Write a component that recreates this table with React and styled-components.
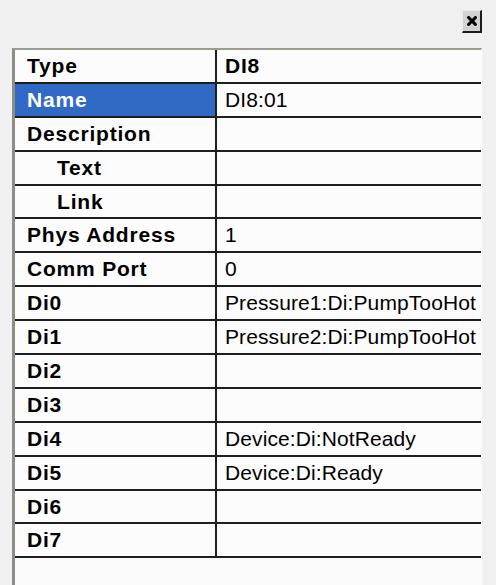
import React from "react";
import styled, { createGlobalStyle } from "styled-components";

const GlobalStyle = createGlobalStyle`
	html, body {
		margin: 0;
		padding: 0;
		background: #f0f0f0;
		font-family: "Liberation Sans", Arial, sans-serif;
	}
`;

const Window = styled.div`
	width: 496px;
	height: 585px;
	overflow: hidden;
	display: flex;
	flex-direction: column;
	background: #f0f0f0;
`;

const TitleBar = styled.div`
	display: flex;
	justify-content: flex-end;
	padding: 10px 14px 0 0;
`;

const CloseButton = styled.button`
	width: 20px;
	height: 23px;
	padding: 0;
	margin: 0;
	box-sizing: border-box;
	display: flex;
	align-items: center;
	justify-content: center;
	background: #d2d2d2;
	border: none;
	border-top: 1px solid #ececec;
	border-left: 1px solid #ececec;
	border-right: 2px solid #1c1c1c;
	border-bottom: 2px solid #1c1c1c;
	cursor: default;
`;

const Frame = styled.div`
	flex: 1;
	margin: 15px 14px 0 12px;
	border-top: 2px solid #9c9c8e;
	border-left: 3px solid #8e8e80;
	border-right: 1px solid #fdfdfd;
	background: #fafafa;
`;

const Row = styled.div`
	display: grid;
	grid-template-columns: 202px 1fr;
	height: 33.9px;
	box-sizing: border-box;
	border-bottom: 2px solid #1e1e1e;
`;

const Label = styled.div`
	display: flex;
	align-items: center;
	box-sizing: border-box;
	padding-left: ${(p) => 12 + (p.$indent ? 30 : 0)}px;
	border-right: 2px solid #1e1e1e;
	background: ${(p) => (p.$selected ? "#316ac5" : "#fcfcfc")};
	color: ${(p) => (p.$selected ? "#ffffff" : "#000000")};
	font-size: 21px;
	font-weight: bold;
	letter-spacing: 0.8px;
	white-space: nowrap;
`;

const Value = styled.div`
	display: flex;
	align-items: center;
	padding-left: 8px;
	background: #fcfcfc;
	color: #000;
	font-size: 21px;
	font-weight: ${(p) => (p.$bold ? "bold" : "normal")};
	letter-spacing: ${(p) => (p.$bold ? "0.8px" : "0.1px")};
	white-space: nowrap;
	overflow: hidden;
`;

const rows = [
	{ label: "Type", value: "DI8", bold: true },
	{ label: "Name", value: "DI8:01", selected: true },
	{ label: "Description", value: "" },
	{ label: "Text", value: "", indent: true },
	{ label: "Link", value: "", indent: true },
	{ label: "Phys Address", value: "1" },
	{ label: "Comm Port", value: "0" },
	{ label: "Di0", value: "Pressure1:Di:PumpTooHot" },
	{ label: "Di1", value: "Pressure2:Di:PumpTooHot" },
	{ label: "Di2", value: "" },
	{ label: "Di3", value: "" },
	{ label: "Di4", value: "Device:Di:NotReady" },
	{ label: "Di5", value: "Device:Di:Ready" },
	{ label: "Di6", value: "" },
	{ label: "Di7", value: "" },
];

export default function App() {
	return (
		<>
			<GlobalStyle />
			<Window>
				<TitleBar>
					<CloseButton aria-label="close">
						<svg width="10" height="10" viewBox="0 0 10 10">
							<path d="M1.6 1.6 L8.4 8.4 M8.4 1.6 L1.6 8.4" stroke="#000" strokeWidth="3" strokeLinecap="square" />
						</svg>
					</CloseButton>
				</TitleBar>
				<Frame>
					{rows.map((r) => (
						<Row key={r.label}>
							<Label $indent={r.indent} $selected={r.selected}>
								{r.label}
							</Label>
							<Value $bold={r.bold}>{r.value}</Value>
						</Row>
					))}
				</Frame>
			</Window>
		</>
	);
}
